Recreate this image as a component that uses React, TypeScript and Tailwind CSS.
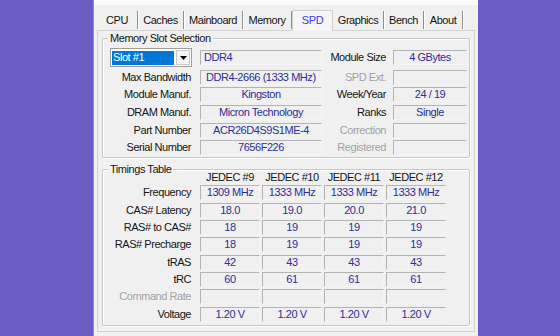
import React from "react";

const tabs = [
  { t: "CPU", w: "w-[41px]" },
  { t: "Caches", w: "w-[46px]" },
  { t: "Mainboard", w: "w-[59px]" },
  { t: "Memory", w: "w-[49px]" },
  { t: "SPD", w: "w-[41px]", sel: true },
  { t: "Graphics", w: "w-[51px]" },
  { t: "Bench", w: "w-[40px]" },
  { t: "About", w: "w-[39px]" },
];

function Field({
  children,
  className = "",
  left = false,
}: {
  children?: React.ReactNode;
  className?: string;
  left?: boolean;
}) {
  return (
    <div
      className={
        "h-[15px] shrink-0 bg-[#f0f0f0] border border-[#b4b4b4] border-b-[#f4f4f4] border-r-[#f4f4f4] text-[#2d2d9f] flex items-center leading-none whitespace-nowrap " +
        (left ? "justify-start pl-[3px] " : "justify-center ") +
        className
      }
    >
      {children}
    </div>
  );
}

function Label({ children, dim = false, className = "" }: { children: React.ReactNode; dim?: boolean; className?: string }) {
  return (
    <div
      className={
        "shrink-0 text-right leading-none whitespace-nowrap " +
        (dim ? "text-[#a3a3a3] " : "text-[#141414] ") +
        className
      }
    >
      {children}
    </div>
  );
}

function Group({ title, className = "", children }: { title: string; className?: string; children: React.ReactNode }) {
  return (
    <div
      className={
        "relative border border-[#c9c9c9] rounded-[2px] shadow-[1px_1px_0_#ffffff,inset_1px_1px_0_#ffffff] " + className
      }
    >
      <span className="absolute -top-[8px] left-[5px] px-[2px] bg-[#f0f0f0] leading-[14px] text-[#141414]">{title}</span>
      {children}
    </div>
  );
}

const infoRows: { l: string; v: string; left?: boolean; r: string; rv: string; rdim?: boolean }[] = [
  { l: "Max Bandwidth", v: "DDR4-2666 (1333 MHz)", left: true, r: "SPD Ext.", rv: "", rdim: true },
  { l: "Module Manuf.", v: "Kingston", r: "Week/Year", rv: "24 / 19" },
  { l: "DRAM Manuf.", v: "Micron Technology", r: "Ranks", rv: "Single" },
  { l: "Part Number", v: "ACR26D4S9S1ME-4", r: "Correction", rv: "", rdim: true },
  { l: "Serial Number", v: "7656F226", r: "Registered", rv: "", rdim: true },
];

const timings: { l: string; v: string[]; dim?: boolean }[] = [
  { l: "Frequency", v: ["1309 MHz", "1333 MHz", "1333 MHz", "1333 MHz"] },
  { l: "CAS# Latency", v: ["18.0", "19.0", "20.0", "21.0"] },
  { l: "RAS# to CAS#", v: ["18", "19", "19", "19"] },
  { l: "RAS# Precharge", v: ["18", "19", "19", "19"] },
  { l: "tRAS", v: ["42", "43", "43", "43"] },
  { l: "tRC", v: ["60", "61", "61", "61"] },
  { l: "Command Rate", v: ["", "", "", ""], dim: true },
  { l: "Voltage", v: ["1.20 V", "1.20 V", "1.20 V", "1.20 V"] },
];

export default function App() {
  return (
    <div className="w-[560px] h-[336px] overflow-hidden bg-[#6a5cc3] flex font-[Liberation_Sans,Arial,sans-serif] text-[11px] tracking-[-0.45px]">
      <div className="ml-[93px] w-[385px] h-full bg-[#f0f0f0] flex flex-col border-l border-[#8f86c9]">
        <div className="h-[5px] bg-[#fbfbfb] shrink-0" />
        {/* tabs */}
        <div className="h-[25px] flex items-end pl-[3px] shrink-0">
          {tabs.map((tab) =>
            tab.sel ? (
              <div
                key={tab.t}
                className={
                  tab.w +
                  " h-[21px] -mb-[1px] relative z-10 bg-[#f5f5f5] border border-b-0 border-[#d0d0d0] flex items-center justify-center text-[#3a3af0] pb-[2px]"
                }
              >
                {tab.t}
              </div>
            ) : (
              <div
                key={tab.t}
                className={
                  tab.w +
                  " h-[18px] border-r border-[#8f8f8f] shadow-[1px_0_0_#ffffff] flex items-center justify-center text-[#141414] mb-[1px]"
                }
              >
                {tab.t}
              </div>
            )
          )}
        </div>
        {/* panel */}
        <div className="ml-[3px] mr-[3px] h-[302px] border border-[#d3d3d3] bg-[#f0f0f0] px-[4px] pt-[7px] flex flex-col">
          <Group title="Memory Slot Selection" className="pt-[9px] pb-[2px] flex flex-col gap-y-[2.7px]">
            {/* first row */}
            <div className="h-[19px] flex items-center">
              <div className="w-[88px] shrink-0 flex">
                <div className="ml-[7px] w-[82px] h-[19px] border border-[#9d9d9d] bg-white flex items-center p-[1px]">
                  <div className="w-[62px] h-[14px] bg-[#0078d7] text-white leading-none flex items-center pl-[1px]">Slot #1</div>
                  <div className="ml-[2px] w-[14px] h-[15px] border border-[#c9c9c9] bg-[#f4f4f4] flex items-center justify-center">
                    <svg width="7" height="4" viewBox="0 0 7 4">
                      <polygon points="0,0 7,0 3.5,4" fill="#000" />
                    </svg>
                  </div>
                </div>
              </div>
              <Field left className="ml-[9px] w-[122px]">DDR4</Field>
              <Label className="w-[64px]">Module Size</Label>
              <Field className="ml-[7px] w-[74px]">4 GBytes</Field>
            </div>
            {infoRows.map((r) => (
              <div key={r.l} className="h-[15px] flex items-center">
                <Label className="w-[88px]">{r.l}</Label>
                <Field left={r.left} className={"ml-[9px] w-[122px] " + (r.left ? "pl-[5px]" : "")}>
                  {r.v}
                </Field>
                <Label dim={r.rdim} className="w-[64px]">
                  {r.r}
                </Label>
                <Field className="ml-[7px] w-[74px]">{r.rv}</Field>
              </div>
            ))}
          </Group>
          <Group title="Timings Table" className="mt-[11px] pb-[3px] flex flex-col">
            <div className="h-[13px] mt-[1px] mb-[1px] flex items-center">
              <div className="w-[97px] shrink-0" />
              <div className="flex gap-[2px]">
                {["JEDEC #9", "JEDEC #10", "JEDEC #11", "JEDEC #12"].map((h) => (
                  <div key={h} className="w-[60px] text-center leading-none text-[#141414] whitespace-nowrap">
                    {h}
                  </div>
                ))}
              </div>
            </div>
            <div className="flex flex-col gap-y-[2.3px]">
              {timings.map((r) => (
                <div key={r.l} className="h-[15px] flex items-center">
                  <Label dim={r.dim} className="w-[88px]">
                    {r.l}
                  </Label>
                  <div className="ml-[9px] flex gap-[2px]">
                    {r.v.map((v, i) => (
                      <Field key={i} className="w-[60px]">
                        {v}
                      </Field>
                    ))}
                  </div>
                </div>
              ))}
            </div>
          </Group>
        </div>
      </div>
    </div>
  );
}
